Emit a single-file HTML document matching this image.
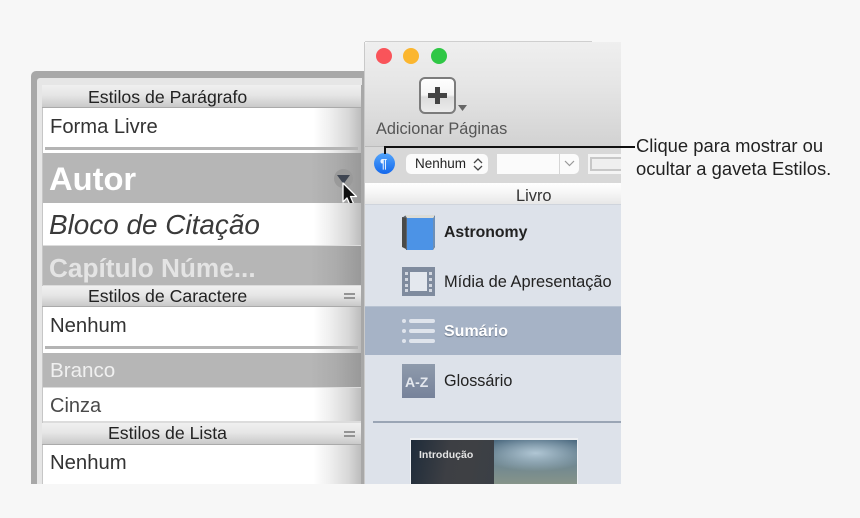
<!DOCTYPE html>
<html><head><meta charset="utf-8"><style>
html,body{margin:0;padding:0;background:#f7f7f7}
#s{position:relative;width:860px;height:518px;overflow:hidden;background:#f7f7f7;font-family:"Liberation Sans",sans-serif}
#s div,#s span.t{position:absolute}
.t{white-space:nowrap;line-height:20px}
.hd{left:42px;width:319px;background:linear-gradient(#f0f0f0,#e6e6e6 45%,#c9c9c9);border-bottom:1px solid #aaa;box-sizing:border-box}
.wr{left:43px;width:318px;background:linear-gradient(90deg,#fff 0,#fff 85%,#f0f0f0 90%,#d8d8d8 96%,#bdbdbd 100%)}
.gr{left:43px;width:318px;background:linear-gradient(90deg,#b6b6b6 0,#b6b6b6 84%,#acacac 92%,#999 100%)}
.dv{left:45px;width:313px;height:3px;background:#b4b4b4}
.eq{left:344px;width:11px;height:2px;border-top:2px solid #949494;border-bottom:2px solid #949494;box-sizing:content-box}
.lb{font-size:17.700px;color:#222;text-align:center}
.lt{left:402px;width:4px;height:4px;border-radius:50%;background:#dfe4ec}
.ll{left:409px;width:26px;height:4px;border-radius:2px;background:#dfe4ec}
</style></head><body><div id="s">

<!-- drawer -->
<div style="left:31px;top:71px;width:340px;height:413px;background:#a8a8a8;border-radius:5px 0 0 0"></div>
<div style="left:37px;top:78px;width:325px;height:406px;background:#e6e6e6;border-radius:3px 0 0 0"></div>
<div style="left:42px;top:85px;width:320px;height:399px;background:#dcdcdc;border-left:1px solid #c6c6c6;border-right:1px solid #a8a8a8;box-sizing:border-box"></div>

<div class="hd" style="top:85px;height:23px"></div>
<span class="t lb" style="left:88px;top:87px">Estilos de Parágrafo</span>
<div class="wr" style="top:108px;height:45px"></div>
<span class="t" style="left:50px;top:117px;font-size:20.200px;color:#333">Forma Livre</span>
<div class="dv" style="top:147px"></div>

<div class="gr" style="top:153px;height:50px"></div>
<span class="t" style="left:49px;top:167px;font-size:32.700px;font-weight:bold;color:#fff;line-height:24px">Autor</span>
<div style="left:334px;top:169px;width:19px;height:19px;border-radius:50%;background:#9a9a9a"></div>
<svg style="position:absolute;left:320px;top:160px" width="50" height="50" viewBox="0 0 50 50">
<path d="M17 15h13l-6.500 9z" fill="#3f4652"/>
<path d="M23 23v19l4-4 3 7 3.500-1.500-3-7h6z" fill="#111" stroke="#fff" stroke-width="1.300" stroke-linejoin="round"/>
</svg>

<div class="wr" style="top:203px;height:42px"></div>
<span class="t" style="left:49px;top:215px;font-size:27.900px;font-style:italic;color:#3a3a3a">Bloco de Citação</span>

<div class="gr" style="top:246px;height:39px"></div>
<span class="t" style="left:49px;top:258px;font-size:26.200px;font-weight:bold;color:#e4e4e4">Capítulo Núme...</span>

<div class="hd" style="top:286px;height:21px"></div>
<span class="t lb" style="left:88px;top:286px">Estilos de Caractere</span>
<div class="eq" style="top:293px"></div>
<div class="wr" style="top:307px;height:46px"></div>
<span class="t" style="left:50px;top:316px;font-size:20.300px;color:#333">Nenhum</span>
<div class="dv" style="top:346px"></div>

<div class="gr" style="top:353px;height:34px"></div>
<span class="t" style="left:50px;top:361px;font-size:20.600px;color:#f0f0f0">Branco</span>
<div class="wr" style="top:388px;height:33px"></div>
<span class="t" style="left:50px;top:396px;font-size:20px;color:#4a4a4a">Cinza</span>

<div class="hd" style="top:423px;height:22px"></div>
<span class="t lb" style="left:108px;top:423px">Estilos de Lista</span>
<div class="eq" style="top:431px"></div>
<div class="wr" style="top:445px;height:39px"></div>
<span class="t" style="left:50px;top:453px;font-size:20.300px;color:#333">Nenhum</span>

<!-- window -->
<div style="left:365px;top:41px;width:227px;height:1px;background:#cfcfcf"></div>
<div style="left:365px;top:42px;width:256px;height:104px;background:linear-gradient(#efefef,#e6e6e6 40%,#d2d2d2);border-radius:4px 0 0 0"></div>
<div style="left:364px;top:42px;width:1px;height:442px;background:#c9c9c9"></div>
<div style="left:376px;top:48px;width:16px;height:16px;border-radius:50%;background:#f9545a"></div>
<div style="left:403px;top:48px;width:16px;height:16px;border-radius:50%;background:#fbb62f"></div>
<div style="left:431px;top:48px;width:16px;height:16px;border-radius:50%;background:#2fc745"></div>

<div style="left:419px;top:77px;width:37px;height:37px;box-sizing:border-box;border:2px solid #7c7c7c;border-radius:6px;background:linear-gradient(#fff,#f5f5f5 48%,#dcdcdc 55%,#ececec)"></div>
<div style="left:428px;top:93px;width:19px;height:5px;background:#444"></div>
<div style="left:435px;top:87px;width:5px;height:17px;background:#444"></div>
<svg style="position:absolute;left:457px;top:105px" width="12" height="7"><path d="M1 0h9l-4.500 6z" fill="#666"/></svg>
<span class="t" style="left:376px;top:119px;font-size:16.300px;color:#555">Adicionar Páginas</span>

<div style="left:365px;top:146px;width:256px;height:37px;background:#d8d8d8;border-top:1px solid #bbb;box-sizing:border-box"></div>
<div style="left:374px;top:153px;width:21px;height:21px;border-radius:50%;background:linear-gradient(#52a4fb,#1468ec)"></div>
<span class="t" style="left:380px;top:154px;font-size:13px;font-weight:bold;color:#e9f2ff">¶</span>

<div style="left:406px;top:154px;width:82px;height:20px;border-radius:5px;background:#fbfbfb"></div>
<span class="t" style="left:415px;top:154px;font-size:13.500px;color:#222">Nenhum</span>
<svg style="position:absolute;left:472px;top:157px" width="12" height="15" fill="none" stroke="#444" stroke-width="1.300"><path d="M2 6l4-4 4 4M2 9l4 4 4-4"/></svg>

<div style="left:497px;top:154px;width:82px;height:20px;border-radius:0 5px 5px 0;background:#fbfbfb"></div>
<div style="left:559px;top:154px;width:1px;height:20px;background:#d6d6d6"></div>
<svg style="position:absolute;left:564px;top:160px" width="11" height="8" fill="none" stroke="#999" stroke-width="1.200"><path d="M1 1l4.500 4.500L10 1"/></svg>
<div style="left:588px;top:154px;width:33px;height:20px;background:#f4f4f4"></div>
<div style="left:590px;top:157px;width:31px;height:14px;box-sizing:border-box;border:2px solid #c8c8c8;border-right:0;background:#efefef"></div>

<div style="left:365px;top:183px;width:256px;height:22px;background:linear-gradient(#fff,#f7f7f7 40%,#e6e6e6)"></div>
<span class="t" style="left:516px;top:186px;font-size:16.400px;color:#333">Livro</span>
<div style="left:365px;top:204px;width:256px;height:280px;background:#dde2ea;border-top:1px solid #cfd4dc;box-sizing:border-box"></div>

<!-- book -->
<svg style="position:absolute;left:400px;top:212px" width="38" height="42" viewBox="0 0 38 42">
<path d="M2 6l4-3h28l1 2v30l-2 3H6z" fill="#5b6470"/>
<path d="M2 5v30l4 2V6z" fill="#4a4a48"/>
<path d="M5 3h29v3H7z" fill="#dcdcd6"/>
<path d="M7 6h26v32H7z" fill="#4c93e6"/>
<path d="M33 6l2-2v30l-2 4z" fill="#6b8fb8"/>
</svg>
<span class="t" style="left:444px;top:223px;font-size:15.800px;font-weight:bold;color:#222">Astronomy</span>

<!-- film -->
<svg style="position:absolute;left:402px;top:267px" width="33" height="29" viewBox="0 0 33 29">
<rect width="33" height="29" fill="#7f8b9e"/>
<rect x="8" y="5" width="17" height="19" fill="#e4e8ee"/>
<g fill="#d2d7e0"><rect x="3" y="5" width="3" height="3"/><rect x="3" y="11" width="3" height="3"/><rect x="3" y="17" width="3" height="3"/><rect x="3" y="22" width="3" height="3"/><rect x="27" y="5" width="3" height="3"/><rect x="27" y="11" width="3" height="3"/><rect x="27" y="17" width="3" height="3"/><rect x="27" y="22" width="3" height="3"/></g>
</svg>
<span class="t" style="left:444px;top:272px;font-size:16.400px;color:#222">Mídia de Apresentação</span>

<!-- selected -->
<div style="left:365px;top:306px;width:256px;height:49px;background:#a6b3c6;border-top:1px solid #b7c2d1;box-sizing:border-box"></div>
<div class="lt" style="top:319px"></div><div class="ll" style="top:319px"></div>
<div class="lt" style="top:329px"></div><div class="ll" style="top:329px"></div>
<div class="lt" style="top:339px"></div><div class="ll" style="top:339px"></div>
<span class="t" style="left:444px;top:322px;font-size:16px;font-weight:bold;color:#fff;text-shadow:0 1px 1px #6b7789">Sumário</span>

<!-- glossary -->
<div style="left:402px;top:364px;width:33px;height:34px;background:linear-gradient(#8f9bac,#76829a)"></div>
<span class="t" style="left:405px;top:372px;font-size:14px;font-weight:bold;color:#e4e8ee">A-Z</span>
<span class="t" style="left:444px;top:371px;font-size:16.200px;color:#222">Glossário</span>

<div style="left:373px;top:421px;width:248px;height:2px;background:#9aa5b5"></div>

<!-- thumbnail -->
<div style="left:410px;top:438px;width:168px;height:46px;background:#eef0f3"></div>
<div style="left:411px;top:440px;width:83px;height:44px;background:linear-gradient(100deg,#1f2c3a,#3d3f44 45%,#3e4044 70%,#3a3f46)"></div>
<div style="left:494px;top:440px;width:83px;height:44px;background:radial-gradient(ellipse 55px 18px at 50% 30%,#b0c6d4,rgba(176,198,212,0)),linear-gradient(#4c6a80,#6f8791 55%,#86948a)"></div>
<span class="t" style="left:419px;top:445px;font-size:10.500px;font-weight:bold;color:#e4e4e4">Introdução</span>

<!-- callout -->
<div style="left:384px;top:146px;width:251px;height:2px;background:#111"></div>
<div style="left:384px;top:146px;width:2px;height:8px;background:#111"></div>
<span class="t" style="left:636px;top:136px;font-size:18.400px;color:#222">Clique para mostrar ou</span>
<span class="t" style="left:636px;top:159px;font-size:18.400px;color:#222">ocultar a gaveta Estilos.</span>

</div></body></html>
